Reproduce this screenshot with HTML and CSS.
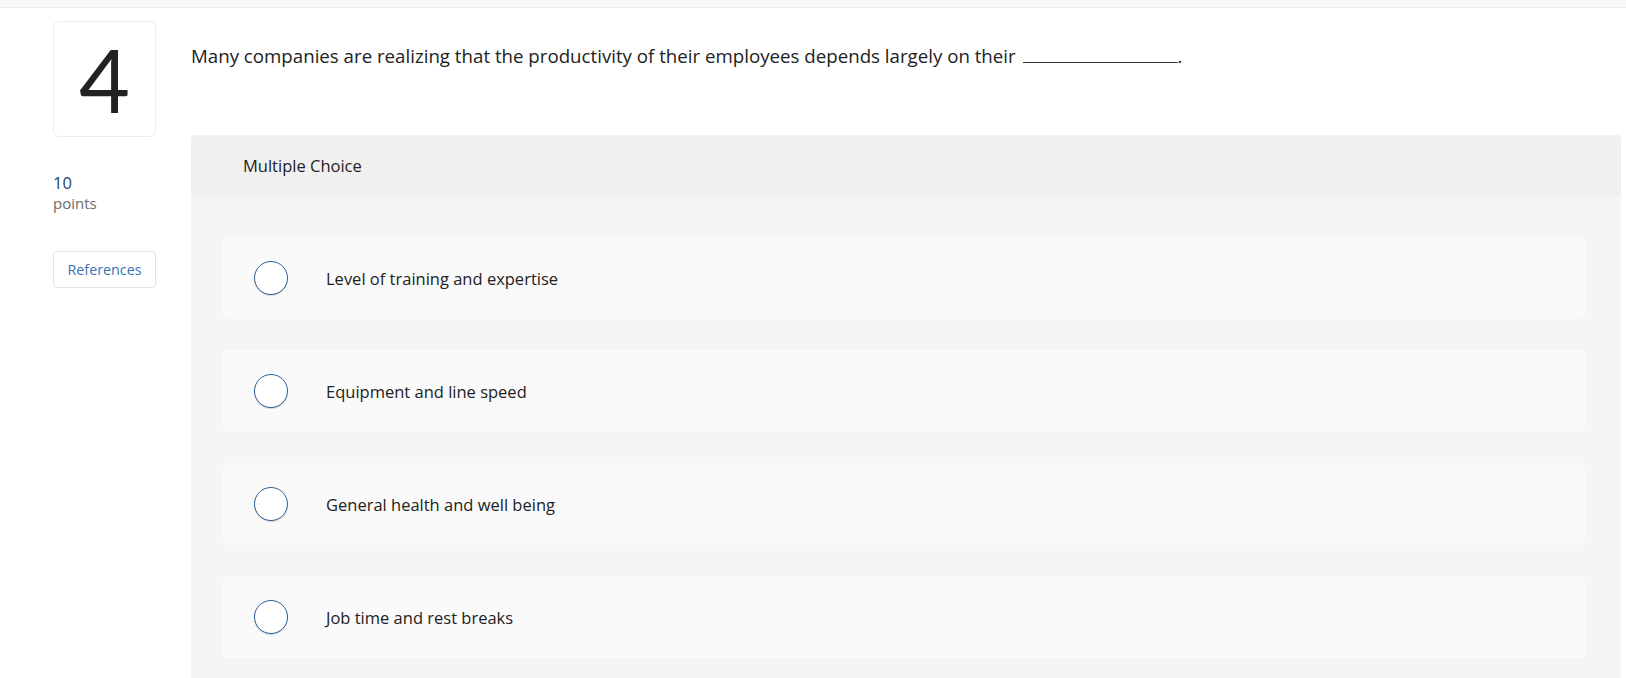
FILE: index.html
```html
<!DOCTYPE html>
<html>
<head>
    <title>Question 4</title>
    <link rel="stylesheet" href="styles.css">
</head>
<body>
    <div class="topbar"></div>
    <div class="question">
        <div class="aside">
            <div class="qnum">4</div>
            <div class="points">
                <div class="points-value">10</div>
                <div class="points-label">points</div>
            </div>
            <button class="refs">References</button>
        </div>
        <div class="main">
            <p class="prompt">Many companies are realizing that the productivity of their employees depends largely on their <span class="blank"></span>.</p>
            <div class="panel">
                <div class="panel-head">Multiple Choice</div>
                <div class="choices">
                    <div class="choice">
                        <span class="radio"></span>
                        <span class="choice-text">Level of training and expertise</span>
                    </div>
                    <div class="choice">
                        <span class="radio"></span>
                        <span class="choice-text">Equipment and line speed</span>
                    </div>
                    <div class="choice">
                        <span class="radio"></span>
                        <span class="choice-text">General health and well being</span>
                    </div>
                    <div class="choice">
                        <span class="radio"></span>
                        <span class="choice-text">Job time and rest breaks</span>
                    </div>
                </div>
            </div>
        </div>
    </div>
</body>
</html>
```

FILE: styles.css
```css
body {
    margin: 0;
    font-family: "Open Sans", Lato, Arial, sans-serif;
    color: #222;
    background-color: #fff;
    height: 678px;
    overflow: hidden;
}

.topbar {
    height: 7px;
    background-color: #f9f9f9;
    border-bottom: 1px solid #ebebeb;
}

.question {
    display: flex;
    padding-top: 13px;
    padding-left: 53px;
    padding-right: 5px;
}

.aside {
    width: 103px;
    flex-shrink: 0;
    margin-right: 35px;
}

.qnum {
    height: 114px;
    border: 1px solid #ececec;
    border-radius: 6px;
    display: flex;
    justify-content: center;
    align-items: center;
    font-family: Lato, sans-serif;
    font-size: 88px;
    color: #222;
}

.points {
    margin-top: 36px;
    font-size: 15px;
}

.points-value {
    color: #1c4472;
    font-size: 16.5px;
    line-height: 20px;
}

.points-label {
    color: #6b6b6b;
    line-height: 20px;
}

.refs {
    display: block;
    width: 100%;
    height: 37px;
    margin-top: 38px;
    padding: 0;
    background-color: #fff;
    border: 1px solid #e2e2e2;
    border-radius: 4px;
    color: #3b73b9;
    font-family: inherit;
    font-size: 14.3px;
    cursor: pointer;
}

.main {
    flex: 1;
}

.prompt {
    margin: 0;
    height: 114px;
    padding-top: 23px;
    box-sizing: border-box;
    font-size: 18.7px;
    line-height: 24px;
    color: #222;
}

.blank {
    display: inline-block;
    width: 155px;
    border-bottom: 1px solid #333;
    margin-left: 2px;
}

.panel {
    background-color: #f5f5f5;
    border-radius: 4px 4px 0 0;
    padding-bottom: 20px;
}

.panel-head {
    height: 62px;
    line-height: 62px;
    padding-left: 52px;
    background-color: #f0f0f0;
    border-radius: 4px 4px 0 0;
    font-size: 16.5px;
}

.choices {
    padding: 40px 36px 0 32px;
}

.choice {
    height: 82px;
    margin-bottom: 31px;
    padding-left: 31px;
    display: flex;
    align-items: center;
    background-color: #fafafa;
    border-radius: 4px;
}

.radio {
    width: 32px;
    height: 32px;
    flex-shrink: 0;
    border: 1.5px solid #2d6096;
    border-radius: 50%;
    background-color: #fff;
    box-shadow: 0 1px 1px rgba(0, 0, 0, 0.15);
}

.choice-text {
    margin-left: 38px;
    font-size: 16.5px;
}
```
